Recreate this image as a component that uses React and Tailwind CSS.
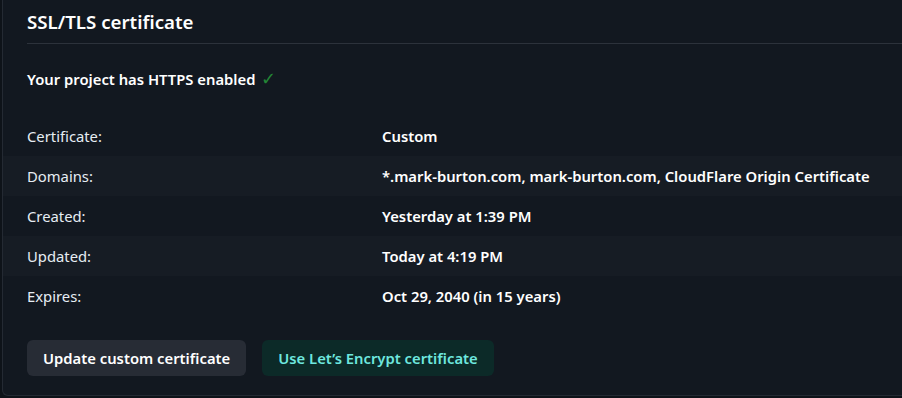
import React from 'react';

const rows = [
    { label: 'Certificate:', value: 'Custom' },
    { label: 'Domains:', value: '*.mark-burton.com, mark-burton.com, CloudFlare Origin Certificate' },
    { label: 'Created:', value: 'Yesterday at 1:39 PM' },
    { label: 'Updated:', value: 'Today at 4:19 PM' },
    { label: 'Expires:', value: 'Oct 29, 2040 (in 15 years)' },
];

function App() {
    return (
        <div
            className="h-[398px] overflow-hidden bg-[#0e1319] pl-[2px] text-[#e6edf3]"
            style={{ fontFamily: '"Noto Sans", "Open Sans", sans-serif' }}
        >
            <div className="h-[396px] border-l border-b border-[#242a33] rounded-bl-md bg-[#121820]">
                <div className="ml-6 h-[44px] border-b border-[#2c323b] flex items-center">
                    <h2 className="text-[18.7px] font-semibold text-white leading-none pt-[1px]">SSL/TLS certificate</h2>
                </div>
                <div className="h-[72px] pl-6 flex items-center pb-[1px]">
                    <p className="text-[14.8px] font-semibold text-white">
                        Your project has HTTPS enabled <span className="ml-[2px] text-[#238636] text-[18px] font-normal leading-none">✓</span>
                    </p>
                </div>
                <div>
                    {rows.map((row, i) => (
                        <div
                            key={row.label}
                            className={
                                'h-10 flex items-center pl-6 text-[14.8px] ' +
                                (i % 2 === 1 ? 'bg-[#161c24]' : '')
                            }
                        >
                            <span className="w-[355px] text-[#e6edf3]">{row.label}</span>
                            <span className="font-semibold text-white">{row.value}</span>
                        </div>
                    ))}
                </div>
                <div className="pl-6 pt-6 flex gap-4">
                    <button className="h-9 px-4 rounded-md bg-[#272c35] text-[14.8px] font-semibold text-white">
                        Update custom certificate
                    </button>
                    <button className="h-9 px-4 rounded-md bg-[#0c2a28] text-[14.8px] font-semibold text-[#6ee7df]">
                        Use Let’s Encrypt certificate
                    </button>
                </div>
            </div>
        </div>
    );
}

export default App;
